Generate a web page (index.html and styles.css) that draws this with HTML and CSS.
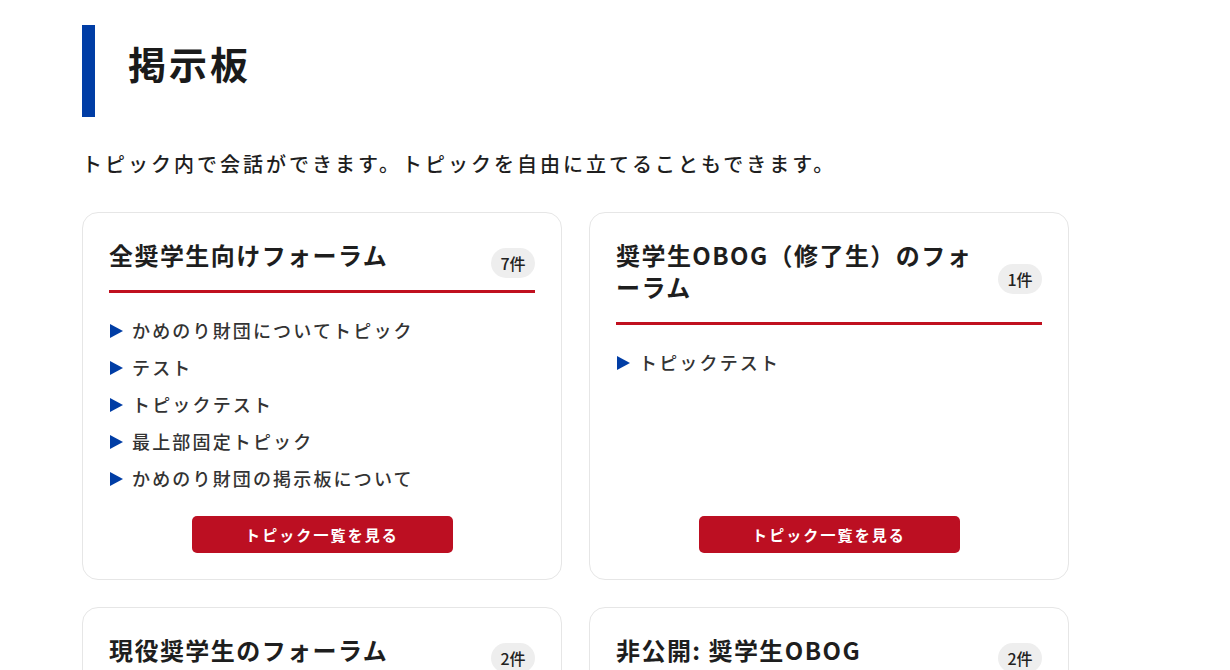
FILE: index.html
```html
<!DOCTYPE html>
<html lang="ja">
<head>
<meta charset="utf-8">
<title>掲示板</title>
<link rel="stylesheet" href="styles.css">
</head>
<body>
<main class="page">
  <header class="page-head">
    <h1 class="page-title">掲示板</h1>
  </header>
  <p class="lead">トピック内で会話ができます。トピックを自由に立てることもできます。</p>

  <div class="grid">
    <section class="card">
      <div class="card-head">
        <h2 class="card-title">全奨学生向けフォーラム</h2>
        <span class="badge">7件</span>
      </div>
      <ul class="topics">
        <li class="topic">かめのり財団についてトピック</li>
        <li class="topic">テスト</li>
        <li class="topic">トピックテスト</li>
        <li class="topic">最上部固定トピック</li>
        <li class="topic">かめのり財団の掲示板について</li>
      </ul>
      <a class="btn" href="#">トピック一覧を見る</a>
    </section>

    <section class="card">
      <div class="card-head">
        <h2 class="card-title">奨学生OBOG（修了生）のフォーラム</h2>
        <span class="badge">1件</span>
      </div>
      <ul class="topics">
        <li class="topic">トピックテスト</li>
      </ul>
      <a class="btn" href="#">トピック一覧を見る</a>
    </section>

    <section class="card">
      <div class="card-head">
        <h2 class="card-title">現役奨学生のフォーラム</h2>
        <span class="badge">2件</span>
      </div>
      <ul class="topics">
        <li class="topic">トピックテスト</li>
        <li class="topic">テスト</li>
      </ul>
      <a class="btn" href="#">トピック一覧を見る</a>
    </section>

    <section class="card">
      <div class="card-head">
        <h2 class="card-title">非公開: 奨学生OBOG</h2>
        <span class="badge">2件</span>
      </div>
      <ul class="topics">
        <li class="topic">トピックテスト</li>
        <li class="topic">テスト</li>
      </ul>
      <a class="btn" href="#">トピック一覧を見る</a>
    </section>
  </div>
</main>
</body>
</html>
```

FILE: styles.css
```css
* { box-sizing: border-box; }

html, body {
  margin: 0;
  padding: 0;
  background: #ffffff;
}

body {
  font-family: "Noto Sans CJK JP", "Noto Sans", sans-serif;
  color: #1e1e1e;
}

.page {
  width: 988px;
  margin-left: 82px;
  padding-top: 25px;
}

.page-head {
  height: 92px;
  border-left: 13px solid #003da5;
  padding-left: 33px;
  padding-bottom: 16px;
  display: flex;
  align-items: center;
}

.page-title {
  margin: 0;
  font-size: 38px;
  font-weight: 700;
  letter-spacing: 0.08em;
  line-height: 1;
  color: #1a1a1a;
}

.lead {
  margin: 32px 0 0;
  font-size: 20px;
  line-height: 30px;
  font-weight: 500;
  letter-spacing: 0.15em;
  color: #1e1e1e;
}

.grid {
  margin-top: 33px;
  display: grid;
  grid-template-columns: 480px 480px;
  column-gap: 27px;
  row-gap: 27px;
}

.card {
  border: 1px solid #e6e6e6;
  border-radius: 16px;
  padding: 26px 26px 26px;
  display: flex;
  flex-direction: column;
  background: #fff;
  min-height: 368px;
}

.card-head {
  display: flex;
  align-items: center;
  justify-content: space-between;
  gap: 16px;
  padding-bottom: 19px;
  border-bottom: 3px solid #c0101f;
}

.card-title {
  margin: 0;
  font-size: 24px;
  line-height: 32px;
  font-weight: 700;
  letter-spacing: 0.06em;
  color: #1e1e1e;
}

.badge {
  flex: none;
  margin: 8px 0 -8px;
  height: 30px;
  min-width: 44px;
  padding: 0 8px;
  border-radius: 15px;
  background: #eeeeee;
  font-size: 16px;
  font-weight: 500;
  line-height: 30px;
  text-align: center;
  color: #222;
}

.topics {
  list-style: none;
  margin: 19px 0 0;
  padding: 0;
}

.topic {
  font-size: 18px;
  line-height: 37px;
  font-weight: 500;
  letter-spacing: 0.12em;
  color: #333333;
  display: flex;
  align-items: center;
}

.topic::before {
  content: "";
  flex: none;
  width: 0;
  height: 0;
  border-top: 7px solid transparent;
  border-bottom: 7px solid transparent;
  border-left: 13px solid #003da5;
  margin-left: 1px;
  margin-right: 9px;
}

.btn {
  margin: auto auto 0;
  width: 261px;
  height: 37px;
  border-radius: 5px;
  background: #bc0f22;
  color: #ffffff;
  text-decoration: none;
  font-size: 15px;
  font-weight: 700;
  letter-spacing: 0.14em;
  display: flex;
  align-items: center;
  justify-content: center;
}
```
